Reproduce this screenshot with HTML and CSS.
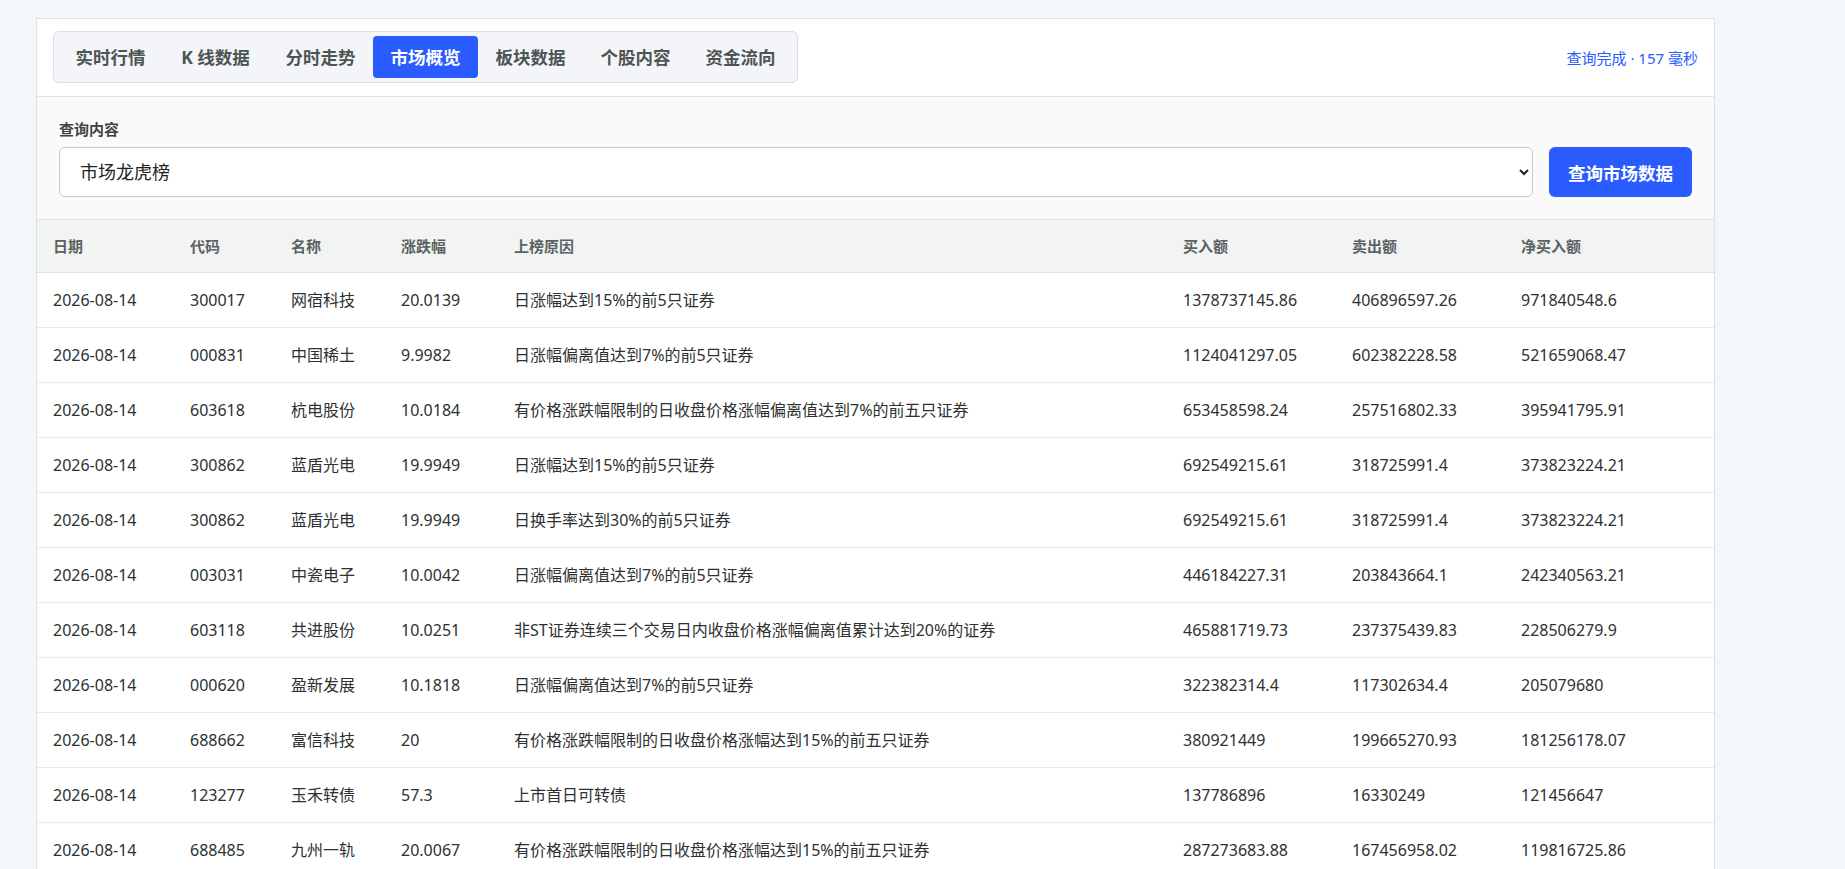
FILE: index.html
```html
<!DOCTYPE html>
<html lang="zh-CN">
<head>
  <meta charset="UTF-8" />
  <meta name="viewport" content="width=device-width, initial-scale=1.0"/>
  <title>行情数据查询 - 市场概览</title>
  <link rel="stylesheet" href="styles.css">
</head>
<body>
  <div class="page">
    <section class="panel">
      <div class="panel-head">
        <nav class="tabs">
          <a class="tab">实时行情</a>
          <a class="tab">K 线数据</a>
          <a class="tab">分时走势</a>
          <a class="tab active">市场概览</a>
          <a class="tab">板块数据</a>
          <a class="tab">个股内容</a>
          <a class="tab">资金流向</a>
        </nav>
        <span class="status">查询完成 · 157 毫秒</span>
      </div>

      <div class="query">
        <label class="query-label" for="queryType">查询内容</label>
        <div class="query-row">
          <select id="queryType" class="query-select">
            <option selected>市场龙虎榜</option>
            <option>涨跌停统计</option>
            <option>市场成交概况</option>
            <option>融资融券</option>
          </select>
          <button class="btn">查询市场数据</button>
        </div>
      </div>

      <table class="data-table">
        <thead>
          <tr>
            <th class="c-date">日期</th>
            <th class="c-code">代码</th>
            <th class="c-name">名称</th>
            <th class="c-chg">涨跌幅</th>
            <th>上榜原因</th>
            <th class="c-buy">买入额</th>
            <th class="c-sell">卖出额</th>
            <th class="c-net">净买入额</th>
          </tr>
        </thead>
        <tbody>
          <tr><td>2026-08-14</td><td>300017</td><td>网宿科技</td><td>20.0139</td><td>日涨幅达到15%的前5只证券</td><td>1378737145.86</td><td>406896597.26</td><td>971840548.6</td></tr>
          <tr><td>2026-08-14</td><td>000831</td><td>中国稀土</td><td>9.9982</td><td>日涨幅偏离值达到7%的前5只证券</td><td>1124041297.05</td><td>602382228.58</td><td>521659068.47</td></tr>
          <tr><td>2026-08-14</td><td>603618</td><td>杭电股份</td><td>10.0184</td><td>有价格涨跌幅限制的日收盘价格涨幅偏离值达到7%的前五只证券</td><td>653458598.24</td><td>257516802.33</td><td>395941795.91</td></tr>
          <tr><td>2026-08-14</td><td>300862</td><td>蓝盾光电</td><td>19.9949</td><td>日涨幅达到15%的前5只证券</td><td>692549215.61</td><td>318725991.4</td><td>373823224.21</td></tr>
          <tr><td>2026-08-14</td><td>300862</td><td>蓝盾光电</td><td>19.9949</td><td>日换手率达到30%的前5只证券</td><td>692549215.61</td><td>318725991.4</td><td>373823224.21</td></tr>
          <tr><td>2026-08-14</td><td>003031</td><td>中瓷电子</td><td>10.0042</td><td>日涨幅偏离值达到7%的前5只证券</td><td>446184227.31</td><td>203843664.1</td><td>242340563.21</td></tr>
          <tr><td>2026-08-14</td><td>603118</td><td>共进股份</td><td>10.0251</td><td>非ST证券连续三个交易日内收盘价格涨幅偏离值累计达到20%的证券</td><td>465881719.73</td><td>237375439.83</td><td>228506279.9</td></tr>
          <tr><td>2026-08-14</td><td>000620</td><td>盈新发展</td><td>10.1818</td><td>日涨幅偏离值达到7%的前5只证券</td><td>322382314.4</td><td>117302634.4</td><td>205079680</td></tr>
          <tr><td>2026-08-14</td><td>688662</td><td>富信科技</td><td>20</td><td>有价格涨跌幅限制的日收盘价格涨幅达到15%的前五只证券</td><td>380921449</td><td>199665270.93</td><td>181256178.07</td></tr>
          <tr><td>2026-08-14</td><td>123277</td><td>玉禾转债</td><td>57.3</td><td>上市首日可转债</td><td>137786896</td><td>16330249</td><td>121456647</td></tr>
          <tr><td>2026-08-14</td><td>688485</td><td>九州一轨</td><td>20.0067</td><td>有价格涨跌幅限制的日收盘价格涨幅达到15%的前五只证券</td><td>287273683.88</td><td>167456958.02</td><td>119816725.86</td></tr>
        </tbody>
      </table>
    </section>
  </div>
</body>
</html>
```

FILE: styles.css
```css
*{margin:0;padding:0;box-sizing:border-box}
html,body{background:#f3f6fb}
body{font-family:"Noto Sans","Noto Sans CJK SC",sans-serif;color:#2d3131}

.page{width:1679px;margin:18px 0 0 36px}
.panel{background:#fff;border:1px solid #dde1e4}

.panel-head{display:flex;justify-content:space-between;align-items:center;padding:12px 16px 13px;border-bottom:1px solid #dfe3e4}
.tabs{display:flex;padding:4px;background:#f3f5f8;border:1px solid #d9dde1;border-radius:6px}
.tab{min-width:105px;height:42px;padding:0 17px;line-height:42px;text-align:center;font-size:17.5px;font-weight:700;color:#4d5454;border-radius:4px;cursor:pointer;white-space:nowrap}
.tab.active{background:#2a5bff;color:#fff}
.status{font-size:15px;color:#2a5bff}

.query{padding:22px;background:#fafafa;border-bottom:1px solid #dfe3e4}
.query-label{display:block;margin-bottom:8px;font-size:15px;line-height:20px;font-weight:600;color:#3f4545}
.query-row{display:flex;gap:16px}
.query-select{flex:1;height:50px;padding:0 14px 0 16px;font-family:inherit;font-size:18px;color:#222;background:#fff;border:1px solid #c3c8c8;border-radius:6px}
.btn{height:50px;padding:0 19px;font-family:inherit;font-size:17.5px;font-weight:700;color:#fff;background:#2a5bff;border:none;border-radius:6px;cursor:pointer}
.btn:hover{background:#1f4de6}

.data-table{width:100%;border-collapse:collapse;table-layout:fixed}
.data-table th{padding:16px;text-align:left;font-size:15px;line-height:20px;font-weight:700;color:#5b6262;background:#f2f4f4;border-bottom:1px solid #dde1e1}
.data-table td{padding:16px;font-size:16px;line-height:22px;color:#2d3131;border-bottom:1px solid #e8ebeb;white-space:nowrap}
.c-date{width:137px}
.c-code{width:101px}
.c-name{width:110px}
.c-chg{width:113px}
.c-buy,.c-sell{width:169px}
.c-net{width:209px}
```
